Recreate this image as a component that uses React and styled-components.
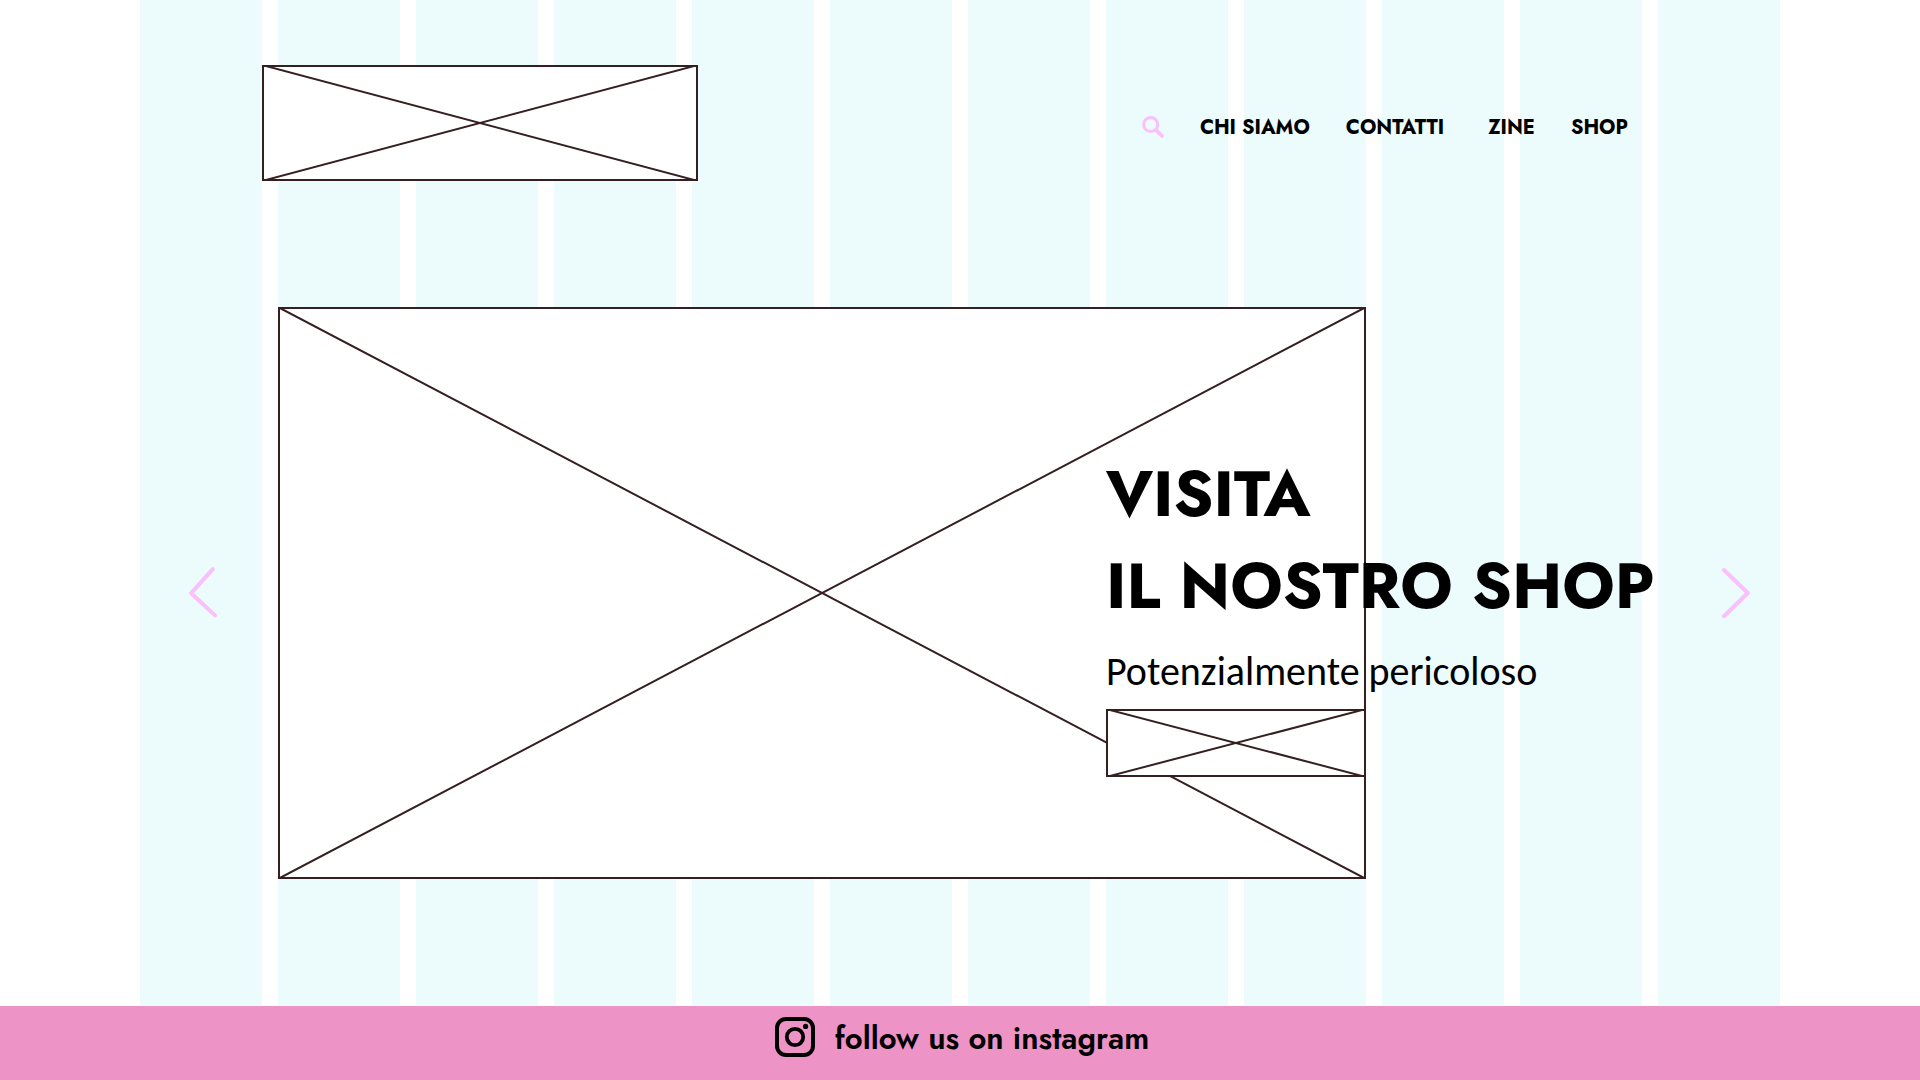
import React from 'react';
import styled, { createGlobalStyle } from 'styled-components';

const display = '"Jost", "Lato", "Liberation Sans", sans-serif';
const body = '"Carlito", "Open Sans", "Noto Sans", sans-serif';
const ink = '#351f20';
const accent = '#fabffd';

const GlobalStyle = createGlobalStyle`
  *, *::before, *::after { box-sizing: border-box; }
  body { margin: 0; background: #fff; color: #000; font-family: ${display}; }
`;

const Page = styled.div`
  display: flex;
  flex-direction: column;
  min-height: 100vh;
`;

const Stage = styled.div`
  flex: 1;
  display: grid;
  grid-template: minmax(0, 1fr) / minmax(0, 1fr);
  width: 100%;
  max-width: 1640px;
  margin: 0 auto;
`;

const Columns = styled.div`
  grid-area: 1 / 1;
  display: grid;
  grid-template-columns: repeat(12, minmax(0, 1fr));
  column-gap: 16px;
`;

const Column = styled.div`
  background: #ecfbfb;
`;

const Content = styled.div`
  grid-area: 1 / 1;
  display: flex;
  flex-direction: column;
  gap: 126px;
  padding: 65px 0 127px;
`;

const Header = styled.header`
  display: flex;
  justify-content: space-between;
  align-items: center;
  padding: 0 152px 0 122px;
`;

const LogoLink = styled.a`
  display: block;
  width: 436px;
`;

const Frame = styled.span`
  display: block;
  width: 100%;
  aspect-ratio: ${(p) => p.$ratio};
  background: #fff;
  box-shadow: inset 0 0 0 2px ${ink};
`;

const Cross = styled.svg`
  display: block;
  width: 100%;
  height: 100%;
  stroke: ${ink};
  stroke-width: 2;
`;

const Nav = styled.nav`
  display: flex;
  align-items: center;
  gap: 44px;
  padding-top: 8px;
`;

const NavGroup = styled.div`
  display: flex;
  align-items: center;
  gap: 36px;
`;

const NavLink = styled.a`
  padding-top: 2px;
  font-size: 20px;
  font-weight: 700;
  line-height: 28px;
  color: #000;
  text-decoration: none;
  white-space: nowrap;
`;

const IconButton = styled.button`
  display: flex;
  padding: 0;
  border: 0;
  background: none;
  color: ${accent};
  cursor: pointer;
`;

const Hero = styled.main`
  display: grid;
  grid-template-columns: repeat(12, minmax(0, 1fr));
  column-gap: 16px;
`;

const HeroImage = styled.div`
  grid-area: 1 / 2 / 2 / 10;
`;

const HeroText = styled.section`
  grid-area: 1 / 8 / 2 / 13;
  display: grid;
  grid-template-columns: repeat(5, minmax(0, 1fr));
  column-gap: 16px;
  align-content: start;
  padding-top: 141px;
`;

const Title = styled.h1`
  grid-column: 1 / -1;
  margin: 0;
  font-size: 64px;
  font-weight: 700;
  line-height: 92px;
  white-space: nowrap;
`;

const Subtitle = styled.p`
  grid-column: 1 / -1;
  margin: 14px 0 11px;
  font-family: ${body};
  font-size: 40px;
  line-height: 52px;
  white-space: nowrap;
`;

const Action = styled.a`
  grid-column: 1 / 3;
`;

const ArrowCell = styled.div`
  grid-area: ${(p) => (p.$side === 'left' ? '1 / 1 / 2 / 2' : '1 / 12 / 2 / 13')};
  display: flex;
  align-items: center;
  justify-content: ${(p) => (p.$side === 'left' ? 'flex-start' : 'flex-end')};
  padding: ${(p) => (p.$side === 'left' ? '0 0 0 48px' : '0 30px 0 0')};
`;

const Footer = styled.footer`
  display: flex;
  justify-content: center;
  align-items: flex-start;
  min-height: 74px;
  padding-top: 11px;
  background: #ed93c6;
`;

const FollowLink = styled.a`
  display: flex;
  align-items: flex-start;
  gap: 20px;
  padding-left: 4px;
  font-size: 31px;
  font-weight: 600;
  line-height: 44px;
  color: #000;
  text-decoration: none;
`;

function Placeholder({ ratio }) {
  return (
    <Frame $ratio={ratio}>
      <Cross aria-hidden="true">
        <line x1="0" y1="0" x2="100%" y2="100%" />
        <line x1="0" y1="100%" x2="100%" y2="0" />
      </Cross>
    </Frame>
  );
}

function SearchIcon() {
  return (
    <svg width="22" height="22" viewBox="0 0 22 22" fill="none" stroke="currentColor" aria-hidden="true">
      <circle cx="8.7" cy="8.5" r="7" strokeWidth="3" />
      <path d="M14 14L20 20" strokeWidth="3.8" strokeLinecap="round" />
    </svg>
  );
}

function Chevron({ d }) {
  return (
    <svg width="32" height="52" viewBox="0 0 32 52" fill="none" stroke="currentColor" strokeWidth="4" strokeLinecap="round" strokeLinejoin="round" aria-hidden="true">
      <path d={d} />
    </svg>
  );
}

function InstagramIcon() {
  return (
    <svg width="40" height="40" viewBox="0 0 40 40" fill="none" stroke="#000" strokeWidth="4" aria-hidden="true">
      <rect x="2" y="2" width="36" height="36" rx="9" />
      <circle cx="20" cy="20" r="8.2" strokeWidth="3.8" />
      <circle cx="30.6" cy="9.4" r="2.6" fill="#000" stroke="none" />
    </svg>
  );
}

export default function App() {
  return (
    <Page>
      <GlobalStyle />
      <Stage>
        <Columns aria-hidden="true">
          {Array.from({ length: 12 }, (_, i) => (
            <Column key={i} />
          ))}
        </Columns>
        <Content>
          <Header>
            <LogoLink href="#home" aria-label="Home">
              <Placeholder ratio="436 / 116" />
            </LogoLink>
            <Nav>
              <NavGroup>
                <IconButton type="button" aria-label="Cerca">
                  <SearchIcon />
                </IconButton>
                <NavLink href="#chi-siamo">CHI SIAMO</NavLink>
                <NavLink href="#contatti">CONTATTI</NavLink>
              </NavGroup>
              <NavGroup>
                <NavLink href="#zine">ZINE</NavLink>
                <NavLink href="#shop">SHOP</NavLink>
              </NavGroup>
            </Nav>
          </Header>
          <Hero>
            <ArrowCell $side="left">
              <IconButton type="button" aria-label="Precedente">
                <Chevron d="M24.8 2.2L3.2 26.2L27 48.4" />
              </IconButton>
            </ArrowCell>
            <HeroImage>
              <Placeholder ratio="1088 / 572" />
            </HeroImage>
            <HeroText>
              <Title>
                VISITA
                <br />
                IL NOSTRO SHOP
              </Title>
              <Subtitle>Potenzialmente pericoloso</Subtitle>
              <Action href="#shop" aria-label="Vai allo shop">
                <Placeholder ratio="260 / 68" />
              </Action>
            </HeroText>
            <ArrowCell $side="right">
              <IconButton type="button" aria-label="Successivo">
                <Chevron d="M6 3L29.8 26L6 49.2" />
              </IconButton>
            </ArrowCell>
          </Hero>
        </Content>
      </Stage>
      <Footer>
        <FollowLink href="#instagram">
          <InstagramIcon />
          follow us on instagram
        </FollowLink>
      </Footer>
    </Page>
  );
}
